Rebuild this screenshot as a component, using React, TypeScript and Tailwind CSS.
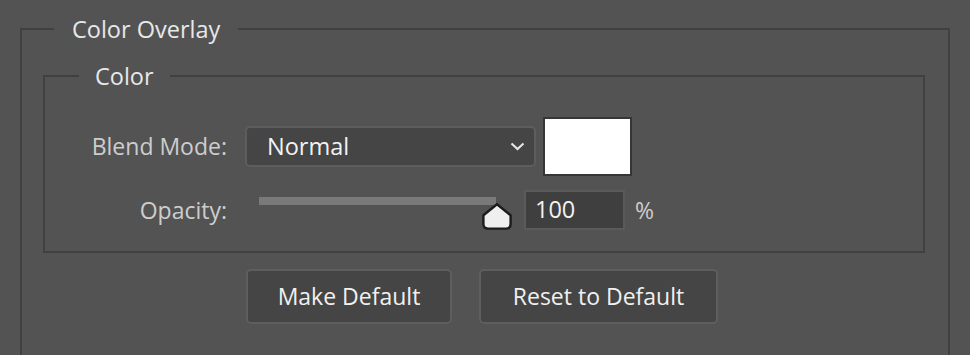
import React from "react";

const font = { fontFamily: '"Open Sans", "Noto Sans", sans-serif' };

const SliderThumb: React.FC = () => (
  <svg
    className="absolute left-[223px] top-[13px]"
    width="30"
    height="27"
    viewBox="0 0 30 27"
  >
    <path
      d="M15 1.2 L28.6 12.2 V21 Q28.6 25.6 24 25.6 H6 Q1.4 25.6 1.4 21 V12.2 Z"
      fill="#efefef"
      stroke="#1c1c1c"
      strokeWidth="2.4"
      strokeLinejoin="round"
    />
  </svg>
);

const Chevron: React.FC = () => (
  <svg width="15" height="9" viewBox="0 0 15 9" className="ml-auto mr-[9px]">
    <path d="M1.5 1.5 L7.5 7 L13.5 1.5" fill="none" stroke="#e4e4e4" strokeWidth="2.2" />
  </svg>
);

interface ButtonProps {
  label: string;
  width: string;
}

const PanelButton: React.FC<ButtonProps> = ({ label, width }) => (
  <button
    className={`${width} h-[55px] rounded-[5px] border-2 border-[#5e5e5e] bg-[#454545] text-[23px] text-[#f0f0f0] flex items-center justify-center`}
  >
    {label}
  </button>
);

const App: React.FC = () => {
  return (
    <div
      className="w-[970px] h-[355px] overflow-hidden bg-[#535353] pt-[13px] px-5"
      style={font}
    >
      <fieldset className="w-[930px] border-2 border-[#404040] pb-10">
        <legend className="ml-[32px] px-[18px] text-[23.5px] leading-[32px] text-[#e8e8e8]">
          Color Overlay
        </legend>
        <div className="pl-[21px] pr-[23px] pt-[15px]">
          <fieldset className="border-2 border-[#404040] pb-[21px]">
            <legend className="ml-[34px] px-[16px] text-[23.5px] leading-[32px] text-[#e8e8e8]">
              Color
            </legend>
            <div className="pt-[25px]">
              <div className="h-[59px] flex items-center">
                <div className="w-[182px] text-right text-[23px] text-[#cdcdcd]">
                  Blend Mode:
                </div>
                <div className="ml-[18px] w-[291px] h-[41px] rounded-[5px] border-2 border-[#5d5d5d] bg-[#454545] flex items-center pl-[20px] text-[23.5px] text-[#f2f2f2]">
                  Normal
                  <Chevron />
                </div>
                <div className="ml-[7px] w-[89px] h-[59px] border-2 border-[#363636] bg-white" />
              </div>
              <div className="mt-[14px] h-[40px] flex items-center">
                <div className="w-[182px] text-right text-[23px] text-[#cdcdcd]">
                  Opacity:
                </div>
                <div className="ml-[32px] w-[265px] h-[40px] relative">
                  <div className="absolute left-0 top-[7px] w-[237px] h-[8px] bg-[#7a7a7a]" />
                  <SliderThumb />
                </div>
                <div className="w-[101px] h-[40px] border-2 border-[#5a5a5a] bg-[#3f3f3f] flex items-center pl-[9px] text-[23.5px] text-[#f2f2f2]">
                  100
                </div>
                <div className="ml-[10px] text-[23px] text-[#cdcdcd]">%</div>
              </div>
            </div>
          </fieldset>
          <div className="mt-[16px] ml-[203px] flex gap-[27px]">
            <PanelButton label="Make Default" width="w-[206px]" />
            <PanelButton label="Reset to Default" width="w-[239px]" />
          </div>
        </div>
      </fieldset>
    </div>
  );
};

export default App;
